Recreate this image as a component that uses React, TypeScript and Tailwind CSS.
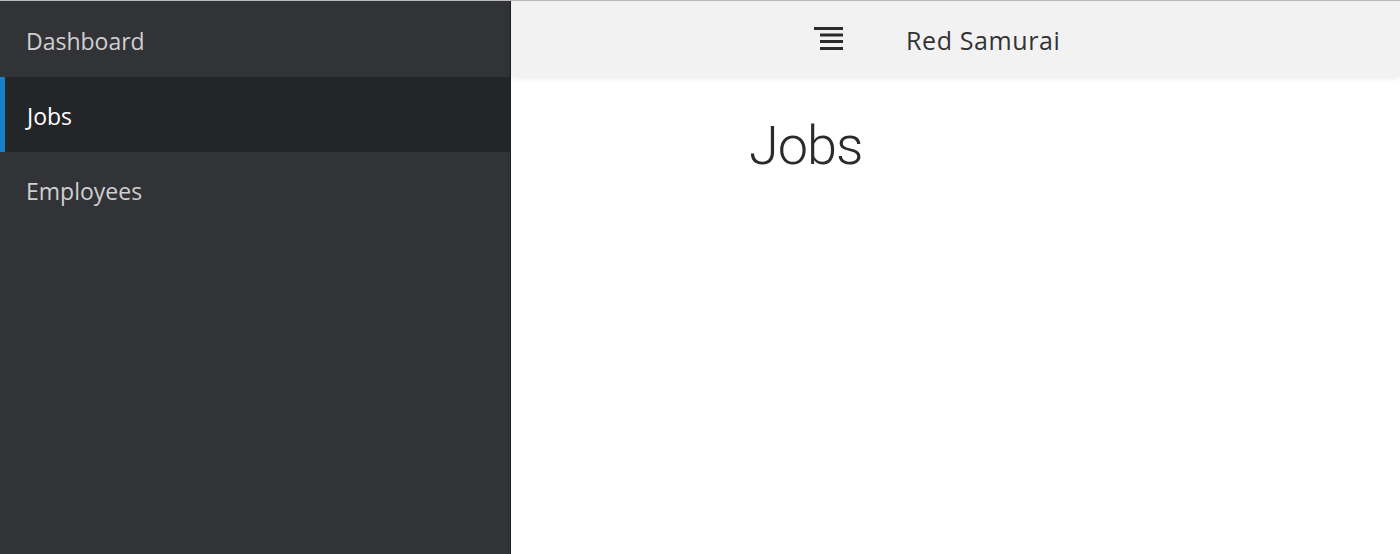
const navItems = [
  { label: "Dashboard", active: false },
  { label: "Jobs", active: true },
  { label: "Employees", active: false },
];

const MenuIcon = () => (
  <svg width="30" height="24" viewBox="0 0 30 24" className="block">
    <rect x="0" y="0" width="29" height="3" fill="#2a2a2a" />
    <rect x="6" y="6.5" width="23" height="3" fill="#2a2a2a" />
    <rect x="6" y="13" width="23" height="3" fill="#2a2a2a" />
    <rect x="6" y="20" width="23" height="3" fill="#2a2a2a" />
  </svg>
);

export default function App() {
  return (
    <div
      className="flex h-[554px] w-[1400px] overflow-hidden border-t border-[#b9b9b9] bg-white"
      style={{ fontFamily: "'Open Sans', 'Noto Sans', sans-serif" }}
    >
      <aside className="flex w-[511px] shrink-0 flex-col border-r border-[#1e1f21] bg-[#323336]">
        {navItems.map((item, i) => (
          <div
            key={item.label}
            className={
              item.active
                ? "flex h-[75px] items-center border-l-[5px] border-[#1680c8] bg-[#242528] pl-[22px] pt-[3px] text-[23px] text-white"
                : i === 0
                  ? "flex h-[76px] items-center pl-[26px] pt-[4px] text-[23px] text-[#cfcfd1]"
                  : "flex h-[75px] items-center pl-[26px] pt-[3px] text-[23px] text-[#cfcfd1]"
            }
          >
            {item.label}
          </div>
        ))}
      </aside>
      <main className="flex flex-1 flex-col">
        <header className="flex h-[75px] items-center bg-[#f2f2f2] pl-[303px] pt-[5px] shadow-[0_2px_6px_rgba(0,0,0,0.09)]">
          <div className="-mt-[5px]">
            <MenuIcon />
          </div>
          <span className="ml-[62px] text-[25px] tracking-[0.6px] text-[#333333]">Red Samurai</span>
        </header>
        <h1
          className="ml-[238px] mt-[43px] text-[54px] font-light leading-none tracking-[-1px] text-[#2b2b2b]"
          style={{ fontFamily: "Roboto, sans-serif" }}
        >
          Jobs
        </h1>
      </main>
    </div>
  );
}
